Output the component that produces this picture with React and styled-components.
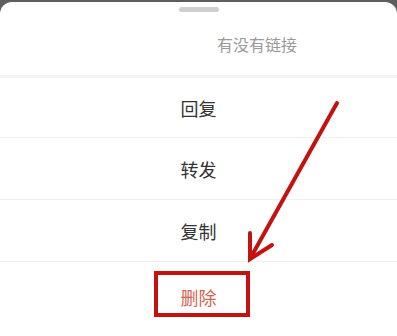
import React from 'react';
import styled, { createGlobalStyle } from 'styled-components';

const Global = createGlobalStyle`
  html, body {
    margin: 0;
    padding: 0;
    background: #5e5e5e;
  }
  body {
    font-family: "Noto Sans CJK SC", "Noto Sans", sans-serif;
  }
`;

const Frame = styled.div`
  position: relative;
  width: 397px;
  height: 336px;
  overflow: hidden;
`;

const Sheet = styled.div`
  margin-top: 2px;
  height: 334px;
  background: #fff;
  border-radius: 12px 12px 0 0;
  display: flex;
  flex-direction: column;
`;

const Handle = styled.div`
  flex: none;
  width: 40px;
  height: 5px;
  border-radius: 3px;
  background: #cfcfcf;
  margin: 5px auto 0;
`;

const Title = styled.div`
  flex: none;
  height: 63px;
  display: flex;
  align-items: center;
  justify-content: center;
  font-size: 16px;
  color: #9a9a9a;
  border-bottom: 3px solid #f4f4f4;
`;

const Hidden = styled.span`
  display: inline-block;
  width: 117px;
`;

const Row = styled.div`
  flex: none;
  height: ${p => p.h}px;
  display: flex;
  align-items: center;
  justify-content: center;
  font-size: 18px;
  color: ${p => (p.danger ? '#d2654f' : '#333')};
  border-bottom: ${p => (p.last ? 'none' : '1px solid #f0f0f0')};
  padding-bottom: ${p => p.pb || 0}px;
  box-sizing: border-box;
`;

const Highlight = styled.div`
  position: absolute;
  left: 154px;
  top: 271px;
  width: 96px;
  height: 46px;
  box-sizing: border-box;
  border: 4px solid #c4120e;
`;

const Overlay = styled.svg`
  position: absolute;
  left: 0;
  top: 0;
`;

export default function App() {
  return (
    <>
      <Global />
      <Frame>
        <Sheet>
          <Handle />
          <Title>
            <Hidden />
            有没有链接
          </Title>
          <Row h={60}>回复</Row>
          <Row h={62}>转发</Row>
          <Row h={62}>复制</Row>
          <Row h={74} danger last pb={4}>删除</Row>
        </Sheet>
        <Highlight />
        <Overlay width="397" height="336" viewBox="0 0 397 336">
          <g stroke="#c4120e" strokeWidth="4" strokeLinecap="round" fill="none">
            <line x1="337" y1="103" x2="251" y2="257" />
            <path d="M250 233 L250 259 L272 245" strokeLinejoin="miter" />
          </g>
        </Overlay>
      </Frame>
    </>
  );
}
